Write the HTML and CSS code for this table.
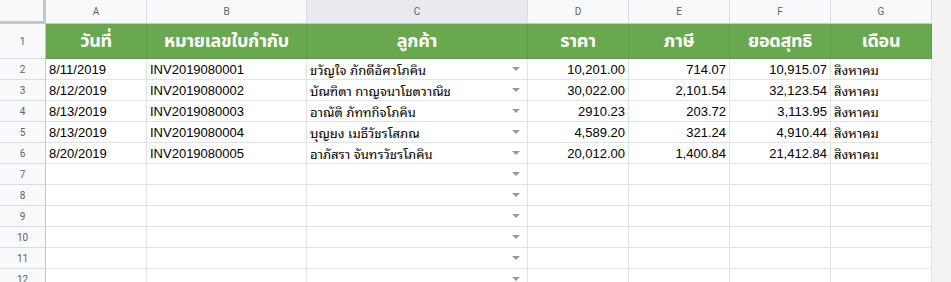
FILE: index.html
```html
<!DOCTYPE html>
<html lang="th">
<head>
<meta charset="utf-8">
<title>Sheet</title>
<link rel="stylesheet" href="styles.css">
</head>
<body>
<div class="sheet">
  <div class="corner"></div>
  <div class="colhead">A</div>
  <div class="colhead">B</div>
  <div class="colhead sel">C</div>
  <div class="colhead">D</div>
  <div class="colhead">E</div>
  <div class="colhead">F</div>
  <div class="colhead">G</div>

  <div class="rowhead">1</div>
  <div class="title">วันที่</div>
  <div class="title">หมายเลขใบกำกับ</div>
  <div class="title">ลูกค้า</div>
  <div class="title">ราคา</div>
  <div class="title">ภาษี</div>
  <div class="title">ยอดสุทธิ</div>
  <div class="title">เดือน</div>

  <div class="rowhead">2</div>
  <div class="cell">8/11/2019</div>
  <div class="cell">INV2019080001</div>
  <div class="cell drop">ขวัญใจ ภักดีอัศวโภคิน<span class="arrow"></span></div>
  <div class="cell num">10,201.00</div>
  <div class="cell num">714.07</div>
  <div class="cell num">10,915.07</div>
  <div class="cell">สิงหาคม</div>

  <div class="rowhead">3</div>
  <div class="cell">8/12/2019</div>
  <div class="cell">INV2019080002</div>
  <div class="cell drop">บัณฑิตา กาญจนาโชตวาณิช<span class="arrow"></span></div>
  <div class="cell num">30,022.00</div>
  <div class="cell num">2,101.54</div>
  <div class="cell num">32,123.54</div>
  <div class="cell">สิงหาคม</div>

  <div class="rowhead">4</div>
  <div class="cell">8/13/2019</div>
  <div class="cell">INV2019080003</div>
  <div class="cell drop">อาณัติ ภัททกิจโภคิน<span class="arrow"></span></div>
  <div class="cell num">2910.23</div>
  <div class="cell num">203.72</div>
  <div class="cell num">3,113.95</div>
  <div class="cell">สิงหาคม</div>

  <div class="rowhead">5</div>
  <div class="cell">8/13/2019</div>
  <div class="cell">INV2019080004</div>
  <div class="cell drop">บุญยง เมธีวัชรโสภณ<span class="arrow"></span></div>
  <div class="cell num">4,589.20</div>
  <div class="cell num">321.24</div>
  <div class="cell num">4,910.44</div>
  <div class="cell">สิงหาคม</div>

  <div class="rowhead">6</div>
  <div class="cell">8/20/2019</div>
  <div class="cell">INV2019080005</div>
  <div class="cell drop">อาภัสรา จันทรวัชรโภคิน<span class="arrow"></span></div>
  <div class="cell num">20,012.00</div>
  <div class="cell num">1,400.84</div>
  <div class="cell num">21,412.84</div>
  <div class="cell">สิงหาคม</div>

  <div class="rowhead">7</div>
  <div class="cell"></div><div class="cell"></div><div class="cell drop"><span class="arrow"></span></div><div class="cell"></div><div class="cell"></div><div class="cell"></div><div class="cell"></div>
  <div class="rowhead">8</div>
  <div class="cell"></div><div class="cell"></div><div class="cell drop"><span class="arrow"></span></div><div class="cell"></div><div class="cell"></div><div class="cell"></div><div class="cell"></div>
  <div class="rowhead">9</div>
  <div class="cell"></div><div class="cell"></div><div class="cell drop"><span class="arrow"></span></div><div class="cell"></div><div class="cell"></div><div class="cell"></div><div class="cell"></div>
  <div class="rowhead">10</div>
  <div class="cell"></div><div class="cell"></div><div class="cell drop"><span class="arrow"></span></div><div class="cell"></div><div class="cell"></div><div class="cell"></div><div class="cell"></div>
  <div class="rowhead">11</div>
  <div class="cell"></div><div class="cell"></div><div class="cell drop"><span class="arrow"></span></div><div class="cell"></div><div class="cell"></div><div class="cell"></div><div class="cell"></div>
  <div class="rowhead">12</div>
  <div class="cell"></div><div class="cell"></div><div class="cell drop"><span class="arrow"></span></div><div class="cell"></div><div class="cell"></div><div class="cell"></div><div class="cell"></div>
</div>
</body>
</html>
```
FILE: styles.css
```css
html, body {
  margin: 0;
  padding: 0;
  background: #f3f3f3;
  height: 100%;
  overflow: hidden;
}

.sheet {
  display: grid;
  grid-template-columns: 46px 101px 160px 221px 101px 101px 101px 101px;
  grid-template-rows: 24px 35px repeat(11, 21px);
  width: 932px;
  background: #ffffff;
  font-family: "Liberation Sans", Arial, "Noto Sans Thai Looped", Loma, Garuda, Tahoma, "Noto Sans Thai", "Noto Sans", sans-serif;
}

.sheet > div {
  box-sizing: border-box;
  border-right: 1px solid #e2e2e3;
  border-bottom: 1px solid #e2e2e3;
  min-width: 0;
  overflow: hidden;
  white-space: nowrap;
}

.corner {
  background: #f8f9fa;
  border-right: 4px solid #c6c6c6 !important;
  border-bottom: 3px solid #c6c6c6 !important;
  margin-bottom: -1px;
  margin-right: -1px;
  height: 24px;
}

.colhead {
  background: #f8f9fa;
  color: #5f6368;
  font-family: Roboto, "Liberation Sans", Arial, sans-serif;
  font-size: 10px;
  display: flex;
  align-items: center;
  justify-content: center;
  border-bottom-color: #c6c6c6 !important;
  border-right-color: #dadce0 !important;
}

.colhead.sel {
  background: #e8eaed;
}

.rowhead {
  background: #f8f9fa;
  color: #5f6368;
  font-family: Roboto, "Liberation Sans", Arial, sans-serif;
  font-size: 10px;
  display: flex;
  align-items: center;
  justify-content: center;
  border-right-color: #c6c6c6 !important;
  border-bottom-color: #dadce0 !important;
}

.title {
  background: #6aa84f;
  color: #ffffff;
  font-family: "Noto Sans Thai", "Noto Sans", "Liberation Sans", sans-serif;
  font-weight: 700;
  font-size: 18px;
  letter-spacing: -0.3px;
  display: flex;
  align-items: center;
  justify-content: center;
  border-right-color: #5e9a44 !important;
  border-bottom-color: #5e9a44 !important;
}

.cell {
  color: #000000;
  font-size: 13px;
  display: flex;
  align-items: center;
  padding: 0 3px;
}

.cell.num {
  justify-content: flex-end;
}

.cell.drop {
  justify-content: space-between;
  padding-right: 7px;
}

.arrow {
  margin-left: auto;
  width: 0;
  height: 0;
  border-left: 4px solid transparent;
  border-right: 4px solid transparent;
  border-top: 4px solid #999999;
}
```
